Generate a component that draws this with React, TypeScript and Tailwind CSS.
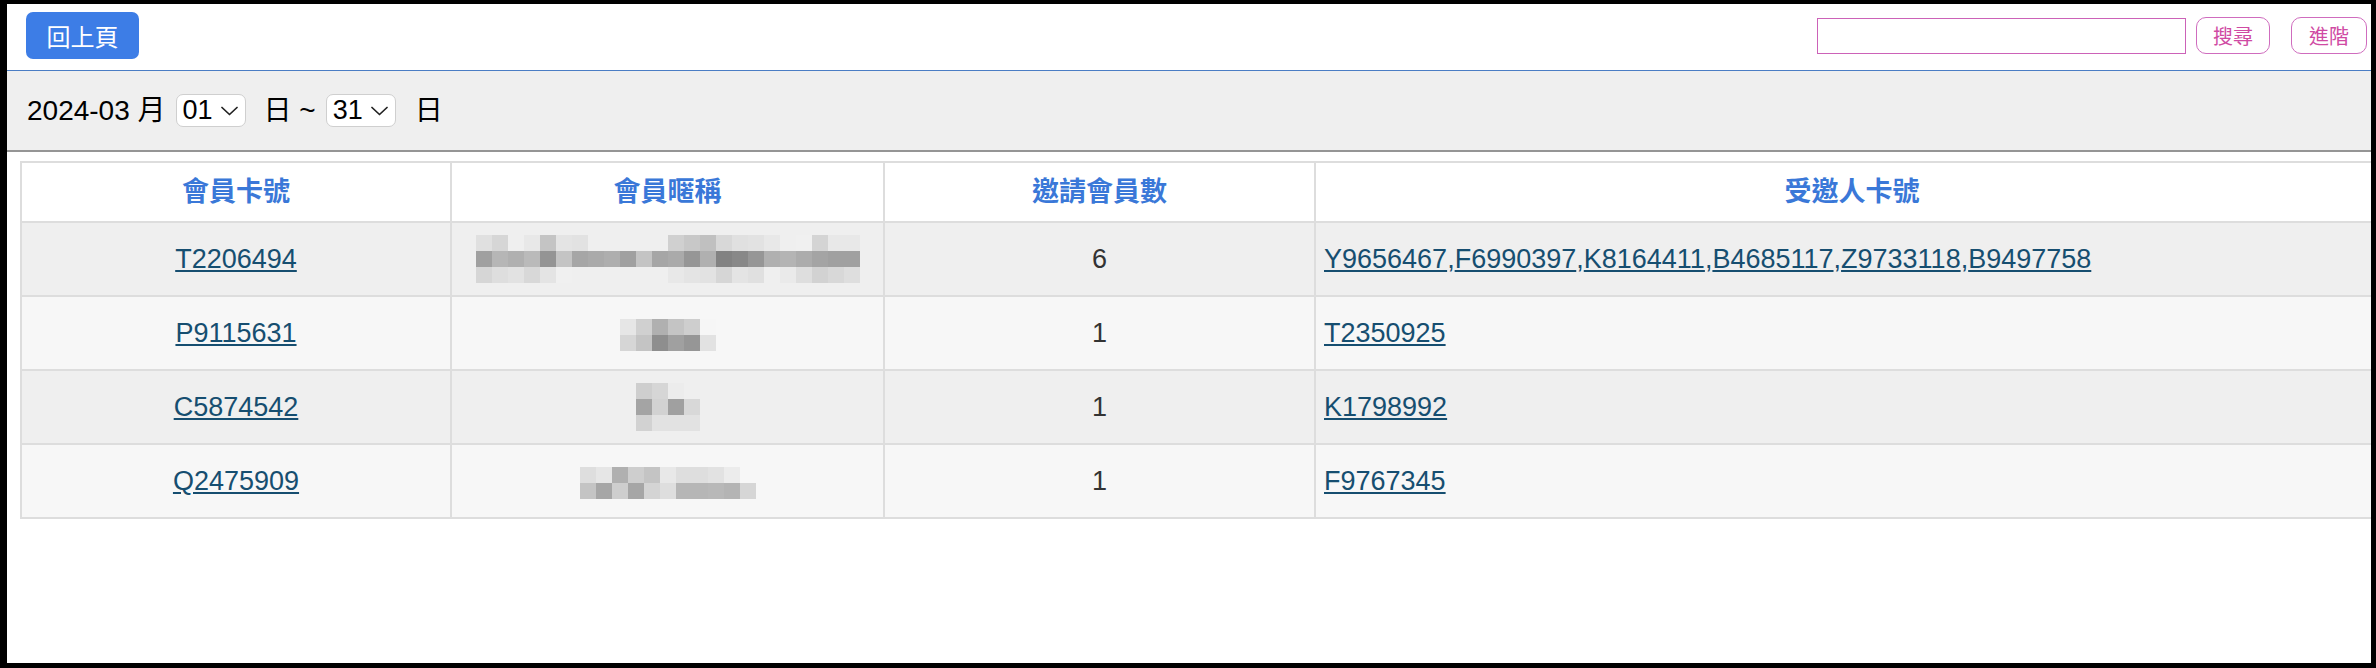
const latin = "font-['Liberation_Sans','Noto_Sans_CJK_TC',sans-serif]";

type Row = {
  card: string;
  mosaic: number[][];
  count: number;
  invited: string[];
};

// blurred nickname blocks, grey levels (255 = empty)
const rows: Row[] = [
  {
    card: "T2206494",
    mosaic: [
      [224, 214, 255, 232, 196, 228, 226, 255, 255, 255, 255, 255, 208, 200, 192, 216, 224, 226, 232, 255, 240, 212, 232, 232],
      [160, 182, 176, 186, 148, 196, 166, 170, 174, 160, 196, 166, 170, 150, 176, 130, 136, 150, 176, 180, 172, 164, 160, 160],
      [214, 222, 226, 216, 228, 240, 255, 255, 255, 255, 255, 255, 232, 228, 226, 214, 228, 224, 255, 234, 222, 210, 216, 222],
    ],
    count: 6,
    invited: ["Y9656467", "F6990397", "K8164411", "B4685117", "Z9733118", "B9497758"],
  },
  {
    card: "P9115631",
    mosaic: [
      [230, 208, 176, 196, 206, 246],
      [214, 196, 142, 160, 150, 226],
    ],
    count: 1,
    invited: ["T2350925"],
  },
  {
    card: "C5874542",
    mosaic: [
      [206, 214, 236, 255],
      [164, 210, 160, 216],
      [210, 226, 226, 226],
    ],
    count: 1,
    invited: ["K1798992"],
  },
  {
    card: "Q2475909",
    mosaic: [
      [222, 230, 176, 206, 196, 232, 222, 222, 226, 236, 255],
      [196, 166, 206, 166, 212, 222, 182, 182, 184, 180, 214],
    ],
    count: 1,
    invited: ["F9767345"],
  },
];

const Mosaic = ({ cells }: { cells: number[][] }) => {
  const w = cells[0].length * 16;
  const h = cells.length * 16;
  return (
    <svg width={w} height={h} className="inline-block align-middle">
      {cells.map((line, r) =>
        line.map((g, c) =>
          g === 255 ? null : (
            <rect key={`${r}-${c}`} x={c * 16} y={r * 16} width={16} height={16} fill={`rgb(${g},${g},${g})`} />
          )
        )
      )}
    </svg>
  );
};

// day picker, drawn like the browser's select box
const DaySelect = ({ value }: { value: string }) => (
  <div className="w-[70px] h-[33px] bg-white border border-[#cfcfcf] rounded-[7px] flex items-center pl-[6px] pr-[7px] justify-between cursor-pointer">
    <span className="text-[27px] leading-none text-black">{value}</span>
    <svg width="17" height="10" viewBox="0 0 17 10" className="mt-[1px]">
      <polyline points="1,1.5 8.5,8.5 16,1.5" fill="none" stroke="#222" strokeWidth="1.7" strokeLinecap="round" strokeLinejoin="round" />
    </svg>
  </div>
);

export default function App() {
  return (
    <div className="w-[2376px] h-[668px] bg-black pt-[4px] pl-[7px] pr-[5px] pb-[5px]">
      <div className="w-full h-full bg-white overflow-hidden">
        {/* top bar */}
        <div className="h-[67px] flex items-start justify-between pl-[19px] pr-[4px] border-b border-[#4a7dc4]">
          <button className="mt-[8px] w-[113px] h-[47px] rounded-[7px] bg-[#3d7de6] text-white text-[24px] font-['Noto_Sans_CJK_TC',sans-serif]">
            回上頁
          </button>
          <div className="flex items-center mt-[13px]">
            <input className="w-[369px] h-[36px] border border-[#cc62b8] bg-white outline-none" />
            <button className="ml-[10px] w-[74px] h-[37px] rounded-[10px] border border-[#cf6cbe] text-[#cf4aa3] text-[20px] font-['Noto_Sans_CJK_TC',sans-serif]">
              搜尋
            </button>
            <button className="ml-[21px] w-[76px] h-[37px] rounded-[10px] border border-[#cf6cbe] text-[#cf4aa3] text-[20px] font-['Noto_Sans_CJK_TC',sans-serif]">
              進階
            </button>
          </div>
        </div>

        {/* date filter */}
        <div className={`${latin} h-[81px] bg-[#efefef] border-b-2 border-[#959595] flex items-center pl-[20px] text-[28px] text-black`}>
          <span>2024-03 月</span>
          <div className="ml-[10px]">
            <DaySelect value="01" />
          </div>
          <span className="ml-[18px]">日 ~</span>
          <div className="ml-[10px]">
            <DaySelect value="31" />
          </div>
          <span className="ml-[19px]">日</span>
        </div>

        {/* result table */}
        <div className="pl-[13px] pt-[9px]">
          <table className={`${latin} w-[2370px] table-fixed border-collapse text-[27px]`}>
            <colgroup>
              <col className="w-[430px]" />
              <col className="w-[433px]" />
              <col className="w-[431px]" />
              <col />
            </colgroup>
            <thead>
              <tr className="h-[60px] bg-white">
                {["會員卡號", "會員暱稱", "邀請會員數", "受邀人卡號"].map((t) => (
                  <th key={t} className="border-2 border-[#dddddd] text-[#3a78d8] font-bold text-center">
                    {t}
                  </th>
                ))}
              </tr>
            </thead>
            <tbody>
              {rows.map((r, i) => (
                <tr key={r.card} className={`h-[74px] ${i % 2 === 0 ? "bg-[#efefef]" : "bg-[#f7f7f7]"}`}>
                  <td className="border-2 border-[#dddddd] text-center">
                    <a href="#" className="text-[#164e70] underline">
                      {r.card}
                    </a>
                  </td>
                  <td className="border-2 border-[#dddddd] text-center">
                    <Mosaic cells={r.mosaic} />
                  </td>
                  <td className="border-2 border-[#dddddd] text-center text-[#333]">{r.count}</td>
                  <td className="border-2 border-[#dddddd] text-left pl-[8px]">
                    {r.invited.map((c, j) => (
                      <span key={c}>
                        {j > 0 && <span className="text-[#164e70]">,</span>}
                        <a href="#" className="text-[#164e70] underline">
                          {c}
                        </a>
                      </span>
                    ))}
                  </td>
                </tr>
              ))}
            </tbody>
          </table>
        </div>
      </div>
    </div>
  );
}
